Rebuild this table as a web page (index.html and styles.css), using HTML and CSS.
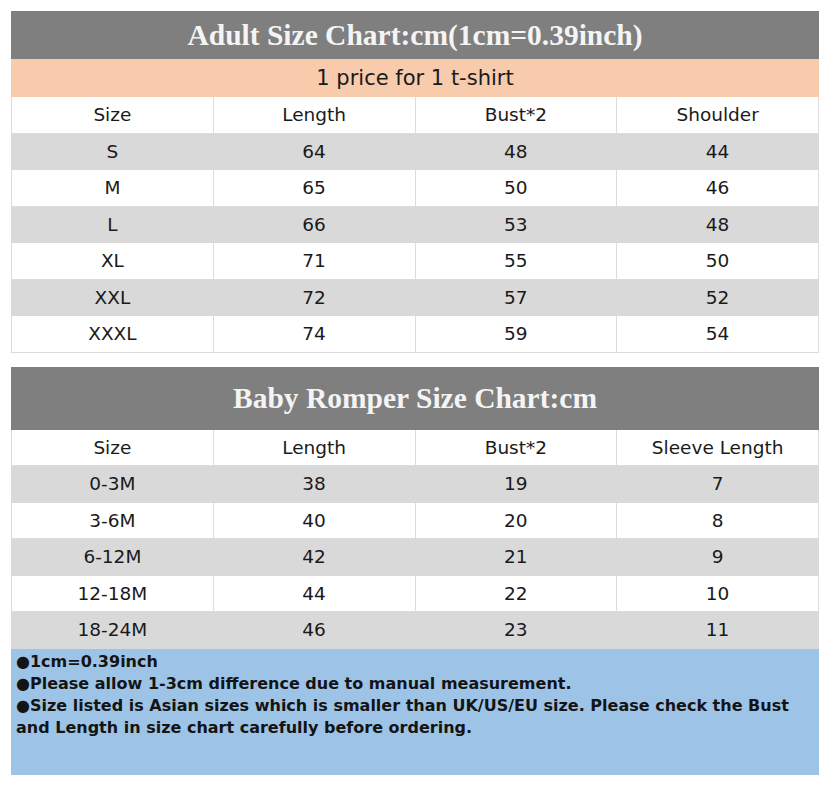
FILE: index.html
```html
<!DOCTYPE html>
<html>
<head>
<meta charset="utf-8">
<link rel="stylesheet" href="styles.css">
</head>
<body>
<div class="page">
  <table class="chart adult">
    <tr><th colspan="4" class="title">Adult Size Chart:cm(1cm=0.39inch)</th></tr>
    <tr><td colspan="4" class="price">1 price for 1 t-shirt</td></tr>
    <tr class="head"><td>Size</td><td>Length</td><td>Bust*2</td><td>Shoulder</td></tr>
    <tr class="alt"><td>S</td><td>64</td><td>48</td><td>44</td></tr>
    <tr><td>M</td><td>65</td><td>50</td><td>46</td></tr>
    <tr class="alt"><td>L</td><td>66</td><td>53</td><td>48</td></tr>
    <tr><td>XL</td><td>71</td><td>55</td><td>50</td></tr>
    <tr class="alt"><td>XXL</td><td>72</td><td>57</td><td>52</td></tr>
    <tr><td>XXXL</td><td>74</td><td>59</td><td>54</td></tr>
  </table>
  <table class="chart baby">
    <tr><th colspan="4" class="title tall">Baby Romper Size Chart:cm</th></tr>
    <tr class="head"><td>Size</td><td>Length</td><td>Bust*2</td><td>Sleeve Length</td></tr>
    <tr class="alt"><td>0-3M</td><td>38</td><td>19</td><td>7</td></tr>
    <tr><td>3-6M</td><td>40</td><td>20</td><td>8</td></tr>
    <tr class="alt"><td>6-12M</td><td>42</td><td>21</td><td>9</td></tr>
    <tr><td>12-18M</td><td>44</td><td>22</td><td>10</td></tr>
    <tr class="alt"><td>18-24M</td><td>46</td><td>23</td><td>11</td></tr>
  </table>
  <div class="notes">
    <p>●1cm=0.39inch</p>
    <p>●Please allow 1-3cm difference due to manual measurement.</p>
    <p>●Size listed is Asian sizes which is smaller than UK/US/EU size. Please check the Bust and Length in size chart carefully before ordering.</p>
  </div>
</div>
</body>
</html>
```
FILE: styles.css
```css
html, body {
  margin: 0;
  padding: 0;
  background: #ffffff;
}
.page {
  width: 808px;
  padding: 11px 0 0 11px;
  font-family: "DejaVu Sans", Tahoma, sans-serif;
  color: #1a1a1a;
}
.chart {
  width: 808px;
  border-collapse: collapse;
  table-layout: fixed;
}
.chart td {
  width: 202px;
  height: 36.5px;
  padding: 0;
  text-align: center;
  font-size: 18.5px;
  border: 1px solid #dcdcdc;
  background: #ffffff;
  box-sizing: border-box;
}
.chart tr.alt td {
  background: #d9d9d9;
  border-color: #d9d9d9;
}
.title {
  background: #7f7f7f;
  color: #f4f4f4;
  font-family: "Liberation Serif", "Times New Roman", serif;
  font-weight: bold;
  font-size: 29.5px;
  height: 46px;
  padding: 0;
  border: 1px solid #7f7f7f;
}
.title.tall {
  height: 61px;
}
.chart td.price {
  background: #f8cbad;
  border-color: #f8cbad;
  font-size: 21px;
  height: 38px;
}
.baby {
  margin-top: 14px;
}
.notes {
  background: #9dc3e6;
  height: 126px;
  box-sizing: border-box;
  padding: 2px 6px 0 5px;
  font-weight: bold;
  font-size: 16px;
  line-height: 22px;
  color: #141414;
}
.notes p {
  margin: 0;
}
```
